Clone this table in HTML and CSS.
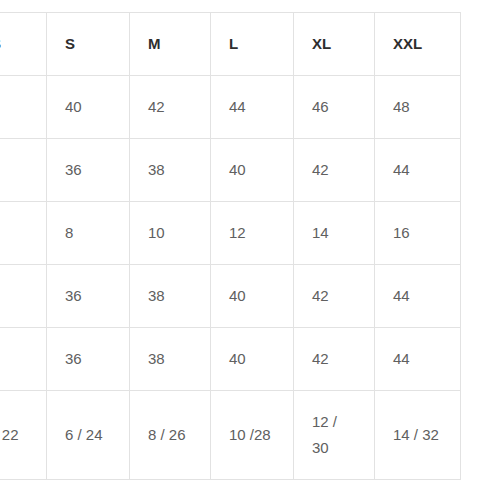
FILE: index.html
```html
<!DOCTYPE html>
<html>
<head>
<meta charset="utf-8">
<link rel="stylesheet" href="styles.css">
</head>
<body>
<div class="page">
<table class="size-table">
<colgroup>
<col class="c-label"><col class="c-xs"><col class="c-s"><col class="c-m"><col class="c-l"><col class="c-xl"><col class="c-xxl">
</colgroup>
<thead>
<tr><th>Size</th><th>XS</th><th>S</th><th>M</th><th>L</th><th>XL</th><th>XXL</th></tr>
</thead>
<tbody>
<tr><td>IT</td><td>38</td><td>40</td><td>42</td><td>44</td><td>46</td><td>48</td></tr>
<tr><td>FR</td><td>34</td><td>36</td><td>38</td><td>40</td><td>42</td><td>44</td></tr>
<tr><td>UK</td><td>6</td><td>8</td><td>10</td><td>12</td><td>14</td><td>16</td></tr>
<tr><td>EU</td><td>34</td><td>36</td><td>38</td><td>40</td><td>42</td><td>44</td></tr>
<tr><td>DE</td><td>34</td><td>36</td><td>38</td><td>40</td><td>42</td><td>44</td></tr>
<tr><td>US / AU</td><td>4 / 22</td><td>6 / 24</td><td>8 / 26</td><td>10 /28</td><td>12 / 30</td><td>14 / 32</td></tr>
</tbody>
</table>
</div>
</body>
</html>
```

FILE: styles.css
```css
html, body {
  margin: 0;
  padding: 0;
  background: #ffffff;
}
.page {
  padding-top: 12px;
  overflow: hidden;
}
.size-table {
  margin-left: -138px;
  border-collapse: collapse;
  table-layout: fixed;
  width: 598px;
  font-family: "Liberation Sans", Arial, Helvetica, sans-serif;
  font-size: 15px;
  line-height: 26px;
  color: #606060;
}
.c-label { width: 100px; }
.c-xs { width: 84px; }
.c-s { width: 83px; }
.c-m { width: 81px; }
.c-l { width: 83px; }
.c-xl { width: 81px; }
.c-xxl { width: 86px; }
.size-table th,
.size-table td {
  border: 1px solid #e2e2e2;
  padding: 18px 18px;
  text-align: left;
  vertical-align: middle;
  font-weight: normal;
}
.size-table th {
  font-weight: bold;
  color: #2e2e2e;
}
```
